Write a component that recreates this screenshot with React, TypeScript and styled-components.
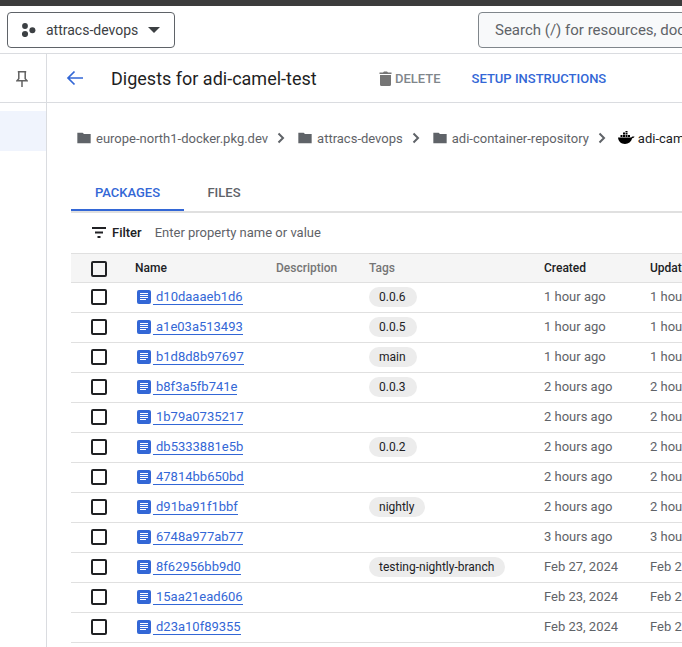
import React from "react";
import styled, { createGlobalStyle } from "styled-components";

const Global = createGlobalStyle`
  html, body { margin: 0; padding: 0; background: #fff; overflow: hidden; }
  body { font-family: Roboto, "Liberation Sans", sans-serif; }
`;

const Page = styled.div`
  width: 682px;
  height: 647px;
  overflow: hidden;
  display: flex;
  flex-direction: column;
`;
const TopStrip = styled.div`
  height: 6px;
  flex: none;
  background: #3c3c3c;
`;
const Header = styled.header`
  height: 48px;
  flex: none;
  box-sizing: border-box;
  border-bottom: 1px solid #dadce0;
  display: flex;
  padding: 6px 0 0 7px;
  gap: 303px;
`;
const ProjectButton = styled.div`
  flex: none;
  width: 168px;
  height: 36px;
  box-sizing: border-box;
  border: 1px solid #5f6368;
  border-radius: 4px;
  display: flex;
  align-items: center;
  padding-left: 14px;
  font-size: 14px;
  color: #3c4043;
  svg { flex: none; }
`;
const ProjectName = styled.span`
  margin: 0 10px 0 10px;
  white-space: nowrap;
`;
const Search = styled.div`
  flex: none;
  width: 300px;
  height: 36px;
  box-sizing: border-box;
  border: 1px solid #80868b;
  border-radius: 4px;
  background: #f8f9fa;
  padding-left: 16px;
  font-size: 15px;
  color: #5f6368;
  line-height: 34px;
  white-space: nowrap;
  overflow: hidden;
`;
const Body = styled.div`
  flex: 1;
  display: flex;
  min-height: 0;
`;
const Rail = styled.nav`
  width: 47px;
  flex: none;
  box-sizing: border-box;
  border-right: 1px solid #dadce0;
`;
const PinCell = styled.div`
  height: 49px;
  box-sizing: border-box;
  border-bottom: 1px solid #dadce0;
  display: flex;
  align-items: center;
  justify-content: center;
  margin-bottom: 8px;
  padding: 1px 2px 0 0;
`;
const RailActive = styled.div`
  height: 40px;
  background: #f0f4fd;
`;
const Main = styled.main`
  flex: 1;
  min-width: 0;
  overflow: hidden;
`;
const TitleBar = styled.div`
  height: 49px;
  box-sizing: border-box;
  border-bottom: 1px solid #dadce0;
  display: flex;
  align-items: center;
  padding-left: 19px;
`;
const Title = styled.h1`
  margin: 0 0 0 27px;
  font-size: 18px;
  font-weight: 400;
  color: #1f1f1f;
  white-space: nowrap;
  width: 205px;
  flex: none;
`;
const ActionButton = styled.span<{ $primary?: boolean }>`
  display: inline-flex;
  align-items: center;
  gap: 2px;
  font-size: 13px;
  font-weight: 500;
  white-space: nowrap;
  color: ${(p) => (p.$primary ? "#3367d6" : "#80868b")};
  margin-left: ${(p) => (p.$primary ? "31px" : "62px")};
`;
const Breadcrumbs = styled.div`
  display: flex;
  align-items: center;
  height: 20px;
  margin: 25px 0 0 29px;
  white-space: nowrap;
  font-size: 13px;
  color: #5f6368;
`;
const Crumb = styled.span<{ $current?: boolean }>`
  display: inline-flex;
  flex: none;
  align-items: center;
  gap: ${(p) => (p.$current ? "3px" : "4px")};
  color: ${(p) => (p.$current ? "#202124" : "#5f6368")};
`;
const Chevron = styled.span`
  display: inline-flex;
  flex: none;
  width: 29px;
  padding-left: 8px;
  box-sizing: border-box;
`;
const Tabs = styled.div`
  display: flex;
  margin: 27px 0 0 24px;
  border-bottom: 2px solid #e0e0e0;
`;
const Tab = styled.div<{ $active?: boolean; $w: number }>`
  width: ${(p) => p.$w}px;
  height: 36px;
  box-sizing: border-box;
  text-align: center;
  line-height: 35px;
  font-size: 13px;
  font-weight: 500;
  color: ${(p) => (p.$active ? "#3367d6" : "#5f6368")};
  border-bottom: 2px solid ${(p) => (p.$active ? "#3367d6" : "transparent")};
`;
const FilterBar = styled.div`
  display: flex;
  align-items: center;
  height: 40px;
  box-sizing: border-box;
  padding-bottom: 1px;
  margin-left: 45px;
  font-size: 13px;
  white-space: nowrap;
`;
const FilterLabel = styled.span`
  font-weight: 500;
  color: #202124;
  margin-left: 6px;
`;
const FilterHint = styled.span`
  color: #5f6368;
  margin-left: 13px;
`;
const Table = styled.div`
  margin-left: 24px;
  width: 700px;
`;
const Row = styled.div<{ $head?: boolean }>`
  display: grid;
  grid-template-columns: 64px 141px 93px 175px 106px 1fr;
  align-items: center;
  height: 30px;
  box-sizing: border-box;
  padding-bottom: 1px;
  border-bottom: 1px solid #e0e0e0;
  font-size: 13px;
  line-height: 16px;
  color: #5f6368;
  white-space: nowrap;
  ${(p) =>
    p.$head &&
    `background: #f5f5f5; border-top: 1px solid #e0e0e0; padding-bottom: 0; font-size: 12px; font-weight: 500; color: #757575;`}
`;
const CheckCell = styled.div<{ $head?: boolean }>`
  padding: ${(p) => (p.$head ? "1px" : "0")} 0 0 20px;
  display: flex;
  align-items: center;
`;
const Box = styled.span`
  display: block;
  width: 16px;
  height: 16px;
  box-sizing: border-box;
  border: 2px solid #202124;
  border-radius: 2px;
`;
const HeadDark = styled.div`
  color: #202124;
`;
const NameCell = styled.div`
  display: flex;
  align-items: center;
  padding-left: 1px;
`;
const DigestLink = styled.span`
  color: #3367d6;
  border-bottom: 1px solid #3367d6;
  line-height: 15px;
  padding-left: 3px;
  margin-left: 1px;
`;
const TagCell = styled.div`
  display: flex;
  align-items: center;
`;
const TagChip = styled.span`
  display: inline-block;
  height: 20px;
  line-height: 20px;
  padding: 0 11px 0 10px;
  border-radius: 10px;
  background: #ececec;
  color: #202124;
  font-size: 12px;
`;

const FolderIcon = () => (
  <svg width="16" height="16" viewBox="0 0 24 24" fill="#5f6368">
    <path d="M10 4H2v16h20V6H12l-2-2z" />
  </svg>
);
const ChevronIcon = () => (
  <svg width="10" height="12" viewBox="0 0 10 12" fill="none" stroke="#5f6368" strokeWidth="2">
    <path d="M2.500 1.500 7 6l-4.500 4.500" />
  </svg>
);
const DockerIcon = () => (
  <svg width="17" height="14" viewBox="0 0 17 14" fill="#000">
    <path d="M0 6.600h13.200c.4-.9 1.300-1.300 3.300-1.100-.3 1-1.200 1.700-2.300 1.800C13.100 11 10.600 13 7 13 3 13 .5 10.800 0 6.600z" />
    <path d="M2.500 4h2v2h-2zM5 4h2v2H5zM7.500 4h2v2h-2zM10 4h2v2h-2zM5 1.500h2v2H5zM7.500 1.500h2v2h-2zM7.500-.5h2v1.600h-2z" />
  </svg>
);
const DocIcon = () => (
  <svg width="16" height="16" viewBox="0 0 16 16">
    <rect x="1" y="1" width="14" height="14" rx="2" fill="#3367d6" />
    <path d="M4 4.500h8M4 6.500h8M4 8.500h8M4 10.500h6" stroke="#fff" strokeWidth="1" />
  </svg>
);

const rows: [string, string, string, string][] = [
  ["d10daaaeb1d6", "0.0.6", "1 hour ago", "1 hour ago"],
  ["a1e03a513493", "0.0.5", "1 hour ago", "1 hour ago"],
  ["b1d8d8b97697", "main", "1 hour ago", "1 hour ago"],
  ["b8f3a5fb741e", "0.0.3", "2 hours ago", "2 hours ago"],
  ["1b79a0735217", "", "2 hours ago", "2 hours ago"],
  ["db5333881e5b", "0.0.2", "2 hours ago", "2 hours ago"],
  ["47814bb650bd", "", "2 hours ago", "2 hours ago"],
  ["d91ba91f1bbf", "nightly", "2 hours ago", "2 hours ago"],
  ["6748a977ab77", "", "3 hours ago", "3 hours ago"],
  ["8f62956bb9d0", "testing-nightly-branch", "Feb 27, 2024", "Feb 27, 2024"],
  ["15aa21ead606", "", "Feb 23, 2024", "Feb 23, 2024"],
  ["d23a10f89355", "", "Feb 23, 2024", "Feb 23, 2024"],
];

export default function App() {
  return (
    <Page>
      <Global />
      <TopStrip />
      <Header>
        <ProjectButton>
          <svg width="14" height="14" viewBox="0 0 14 14" fill="#3c4043">
            <circle cx="3" cy="3" r="2.900" />
            <circle cx="3" cy="11" r="3.100" />
            <circle cx="10.400" cy="7.300" r="3" />
          </svg>
          <ProjectName>attracs-devops</ProjectName>
          <svg width="12" height="6" viewBox="0 0 12 6" fill="#3c4043">
            <path d="M0 0h12L6 6z" />
          </svg>
        </ProjectButton>
        <Search>Search (/) for resources, docs, products, and more</Search>
      </Header>
      <Body>
        <Rail>
          <PinCell>
            <svg width="12" height="16" viewBox="0 0 12 16" fill="none" stroke="#616161" strokeWidth="1.500">
              <path d="M1.800.8h8.400M2.800.8v7L1 9.800h10L9.200 7.800V.8M6 9.800V16" />
            </svg>
          </PinCell>
          <RailActive />
        </Rail>
        <Main>
          <TitleBar>
            <svg width="18" height="18" viewBox="0 0 18 18" fill="none" stroke="#3367d6" strokeWidth="1.700">
              <path d="M17 9H2.500M8.500 2.500 2 9l6.500 6.500" />
            </svg>
            <Title>Digests for adi-camel-test</Title>
            <ActionButton>
              <svg width="15" height="16" viewBox="0 0 15 16" fill="#757575">
                <path d="M2 5h11v9.500a1.500 1.500 0 0 1-1.500 1.500h-8A1.500 1.500 0 0 1 2 14.500zM1.500 2.500H5L6 1.500h3l1 1h3.500V4h-12z" />
              </svg>
              DELETE
            </ActionButton>
            <ActionButton $primary>SETUP INSTRUCTIONS</ActionButton>
          </TitleBar>
          <Breadcrumbs>
            <Crumb><FolderIcon />europe-north1-docker.pkg.dev</Crumb>
            <Chevron><ChevronIcon /></Chevron>
            <Crumb><FolderIcon />attracs-devops</Crumb>
            <Chevron><ChevronIcon /></Chevron>
            <Crumb><FolderIcon />adi-container-repository</Crumb>
            <Chevron><ChevronIcon /></Chevron>
            <Crumb $current><DockerIcon />adi-camel-test</Crumb>
          </Breadcrumbs>
          <Tabs>
            <Tab $active $w={113}>PACKAGES</Tab>
            <Tab $w={80}>FILES</Tab>
          </Tabs>
          <FilterBar>
            <svg width="14" height="11" viewBox="0 0 14 11" stroke="#202124" strokeWidth="2">
              <path d="M0 1h14M3 5.500h8M5.500 10h3" />
            </svg>
            <FilterLabel>Filter</FilterLabel>
            <FilterHint>Enter property name or value</FilterHint>
          </FilterBar>
          <Table>
            <Row $head>
              <CheckCell $head><Box /></CheckCell>
              <HeadDark>Name</HeadDark>
              <div>Description</div>
              <div>Tags</div>
              <HeadDark>Created</HeadDark>
              <HeadDark>Updated</HeadDark>
            </Row>
            {rows.map(([name, tag, created, updated]) => (
              <Row key={name}>
                <CheckCell><Box /></CheckCell>
                <NameCell><DocIcon /><DigestLink>{name}</DigestLink></NameCell>
                <div />
                <TagCell>{tag && <TagChip>{tag}</TagChip>}</TagCell>
                <div>{created}</div>
                <div>{updated}</div>
              </Row>
            ))}
          </Table>
        </Main>
      </Body>
    </Page>
  );
}
